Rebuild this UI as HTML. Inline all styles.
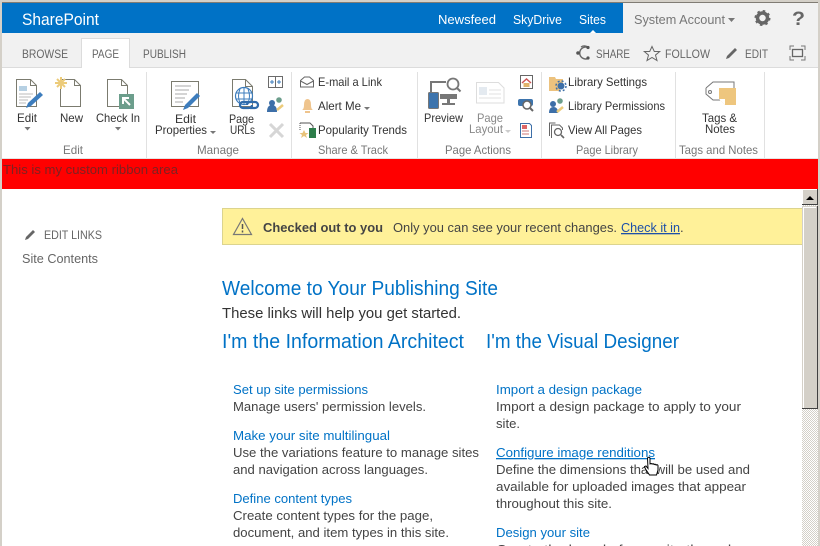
<!DOCTYPE html>
<html><head><meta charset="utf-8"><style>
html,body{margin:0;padding:0;width:820px;height:546px;overflow:hidden;background:#fff}
svg{display:block}
text{font-family:"Liberation Sans",sans-serif;font-size:12px;fill:#3b3b3b;white-space:pre}
.t{font-size:11.5px;fill:#666}
.r{font-size:12px;fill:#333}
.g{font-size:12px;fill:#777}
.l{font-size:13px;fill:#0072c6}
.b{font-size:13px;fill:#444}
.h{font-size:20px;fill:#0072c6}
.i{fill:none;stroke:#7b7b6f;stroke-width:1}
</style></head><body>
<svg width="820" height="546" viewBox="0 0 820 546" xmlns="http://www.w3.org/2000/svg">
<defs><pattern id="ck" width="2" height="2" patternUnits="userSpaceOnUse"><rect width="2" height="2" fill="#fff"/><rect width="1" height="1" fill="#d4d0c8"/><rect x="1" y="1" width="1" height="1" fill="#d4d0c8"/></pattern></defs>
<rect width="820" height="546" fill="#fff"/>
<rect x="0" y="0" width="820" height="2" fill="#d4d0c8"/><rect x="2" y="2" width="816" height="1" fill="#807c74"/>
<rect x="0" y="0" width="2" height="546" fill="#d4d0c8"/>
<rect x="818" y="0" width="2" height="546" fill="#d4d0c8"/>
<!-- top bar -->
<rect x="2" y="3" width="621" height="30" fill="#0072c6"/>
<rect x="623" y="3" width="195" height="30" fill="#f1f1f1"/>
<text x="22" y="25" textLength="77" lengthAdjust="spacingAndGlyphs" style="font-size:17px;fill:#fff">SharePoint</text>
<text x="438" y="24" textLength="58" lengthAdjust="spacingAndGlyphs" style="font-size:13px;fill:#fff">Newsfeed</text>
<text x="513" y="24" textLength="49" lengthAdjust="spacingAndGlyphs" style="font-size:13px;fill:#fff">SkyDrive</text>
<text x="579" y="24" textLength="27" lengthAdjust="spacingAndGlyphs" style="font-size:13px;fill:#fff">Sites</text>
<path d="M590 33l3-3 3 3z" fill="#fff"/>
<text x="634" y="24" textLength="91" lengthAdjust="spacingAndGlyphs" style="font-size:13px;fill:#777">System Account</text>
<path d="M728 18h7l-3.500 4z" fill="#777"/>
<circle cx="762.500" cy="18" r="5" fill="none" stroke="#666" stroke-width="3.500"/>
<circle cx="762.500" cy="18" r="7" fill="none" stroke="#666" stroke-width="2" stroke-dasharray="2.500 3"/>
<text x="792" y="25" textLength="13" lengthAdjust="spacingAndGlyphs" style="font-size:19px;font-weight:bold;fill:#666">?</text>
<!-- tabs -->
<rect x="2" y="33" width="816" height="34" fill="#f1f1f1"/>
<rect x="2" y="67" width="816" height="1" fill="#dcdcdc"/>
<path d="M81.500 68V38.500H129.500V68" fill="#fff" stroke="#dcdcdc"/>
<text x="22" y="58" textLength="46" lengthAdjust="spacingAndGlyphs" class="t">BROWSE</text>
<text x="92" y="58" textLength="27" lengthAdjust="spacingAndGlyphs" class="t">PAGE</text>
<text x="143" y="58" textLength="43" lengthAdjust="spacingAndGlyphs" class="t">PUBLISH</text>
<path d="M589 48a6 6 0 1 0 0 10" fill="none" stroke="#666" stroke-width="1.400"/><path d="M581 47a6 6 0 0 1 8 1" fill="none" stroke="#666" stroke-width="1.200"/><circle cx="578" cy="53" r="1.800" fill="#555"/><circle cx="588" cy="47.500" r="1.600" fill="#555"/><circle cx="588" cy="58" r="1.600" fill="#555"/>
<text x="596" y="58" textLength="34" lengthAdjust="spacingAndGlyphs" class="t">SHARE</text>
<path d="M652 46.500l2.300 5h5.400l-4.200 3.600 1.500 5.400-5-3-5 3 1.500-5.400-4.200-3.600h5.400z" fill="none" stroke="#666"/>
<text x="665" y="58" textLength="45" lengthAdjust="spacingAndGlyphs" class="t">FOLLOW</text>
<path d="M726 59l1-3 8-8 2 2-8 8z" fill="#666"/>
<text x="745" y="58" textLength="23" lengthAdjust="spacingAndGlyphs" class="t">EDIT</text>
<path d="M790 50v-4h4M801 46h4v4M805 56v4h-4M794 60h-4v-4" fill="none" stroke="#777"/><rect x="792.500" y="49.500" width="10" height="7" fill="none" stroke="#666" stroke-width="1.300"/>
<!-- ribbon separators -->
<g fill="#e1e1e1"><rect x="146" y="72" width="1" height="86"/><rect x="291" y="72" width="1" height="86"/><rect x="417" y="72" width="1" height="86"/><rect x="541" y="72" width="1" height="86"/><rect x="675" y="72" width="1" height="86"/><rect x="764" y="72" width="1" height="86"/></g>
<rect x="2" y="158" width="816" height="1" fill="#e4e4e4"/>
<!-- Edit icon -->
<path class="i" d="M16.500 79.500h14l6 6v21h-20zM30.500 79.500v6h6"/>
<rect x="19" y="86" width="8" height="5" fill="#b6d0e3"/>
<path d="M19 94h14M19 97h12M19 100h9M19 103h7" stroke="#bbb"/>
<path d="M26 108l2-5 12-11 3 3-12 11z" fill="#3d7dbd"/>
<!-- New -->
<path class="i" d="M60.500 79.500h14l6 6v21h-20zM74.500 79.500v6h6"/>
<path d="M61 77v12M55 83h12M57 79l8 8M65 79l-8 8" stroke="#eccb7a" stroke-width="2"/>
<!-- Check in -->
<path class="i" d="M107.500 79.500h14l6 6v21h-20zM121.500 79.500v6h6"/>
<rect x="119" y="94" width="15" height="15" fill="#6c9e8c"/>
<path d="M130 105l-6-6M123 104v-6h6" fill="none" stroke="#fff" stroke-width="2"/>
<text x="17" y="122" textLength="20" lengthAdjust="spacingAndGlyphs" class="r">Edit</text>
<path d="M24.500 127h6l-3 3.500z" fill="#777"/>
<text x="60" y="122" textLength="23" lengthAdjust="spacingAndGlyphs" class="r">New</text>
<text x="96" y="122" textLength="44" lengthAdjust="spacingAndGlyphs" class="r">Check In</text>
<path d="M115 127h6l-3 3.500z" fill="#777"/>
<text x="63" y="154" textLength="20" lengthAdjust="spacingAndGlyphs" class="g">Edit</text>
<!-- Edit props -->
<rect x="171.500" y="81.500" width="27" height="25" class="i"/>
<path d="M175 86h16M175 90h14M175 94h12M175 98h10M175 102h8" stroke="#aaa"/>
<path d="M183 110l2-5 12-12 3 3-12 12z" fill="#3d7dbd"/>
<text x="175" y="123" textLength="21" lengthAdjust="spacingAndGlyphs" class="r">Edit</text>
<text x="155" y="134" textLength="52" lengthAdjust="spacingAndGlyphs" class="r">Properties</text>
<path d="M210 131h6l-3 3z" fill="#777"/>
<!-- Page URLs -->
<path class="i" d="M232.500 79.500h13l7 7v20h-20zM245.500 79.500v7h7"/>
<circle cx="244" cy="96" r="8.500" fill="#fff" stroke="#3d7dbd" stroke-width="1.200"/><path d="M235.500 93h17M235.500 99h17M244 87.500v17M240 89q-3 7 0 14M248 89q3 7 0 14" fill="none" stroke="#3d7dbd"/>
<path d="M249 102h-6a3 3 0 0 0 0 6h6a3 3 0 0 0 3-3M247 105a3 3 0 0 1 3-3h5a3 3 0 0 1 0 6h-5" fill="none" stroke="#2f6bab" stroke-width="2.300"/>
<text x="229" y="123" textLength="25" lengthAdjust="spacingAndGlyphs" class="r">Page</text>
<text x="230" y="134" textLength="25" lengthAdjust="spacingAndGlyphs" class="r">URLs</text>
<rect x="268.500" y="76.500" width="14" height="11" fill="none" stroke="#6b6b6b"/><path d="M275.500 77v10" stroke="#6b6b6b"/><path d="M270 82h4M272 80v4M277 82h4M279 80v4" stroke="#3d7dbd"/>
<circle cx="272" cy="103" r="3" fill="#3d6fa8"/><path d="M267 112q0-7 5-7t5 7z" fill="#3d6fa8"/><circle cx="279" cy="100" r="2.800" fill="#6c9e8c"/><path d="M277 110l6-5" stroke="#eccb7a" stroke-width="2.500"/>
<path d="M270 124l13 13M283 124l-13 13" stroke="#d6d6d6" stroke-width="3"/>
<text x="197" y="154" textLength="42" lengthAdjust="spacingAndGlyphs" class="g">Manage</text>
<!-- Share & track -->
<path d="M300.500 80.500l4-3.500h5l4 3.500v6.500h-13z" fill="none" stroke="#666"/><path d="M300.500 81l6.500 3.500 6.500-3.500" fill="none" stroke="#666"/>
<path d="M302 110q2-1 2-5 0-6 3.500-6t3.500 6q0 4 2 5z" fill="#efc48d"/><rect x="305" y="111" width="5" height="2" fill="#efc48d"/>
<path d="M300 123h10l3 3v2" class="i" style="stroke:#555"/><path d="M300 123v8" stroke="#555" stroke-dasharray="1 1"/><rect x="309" y="128" width="7" height="10" fill="#2d7d4a"/><path d="M304 130l1.500 3h3l-2.500 2 1 3-3-2-3 2 1-3-2.500-2h3z" fill="#e8c37a"/>
<text x="318" y="86" textLength="64" lengthAdjust="spacingAndGlyphs" class="r">E-mail a Link</text>
<text x="318" y="110" textLength="43" lengthAdjust="spacingAndGlyphs" class="r">Alert Me</text>
<path d="M364 107h6l-3 3z" fill="#777"/>
<text x="318" y="134" textLength="89" lengthAdjust="spacingAndGlyphs" class="r">Popularity Trends</text>
<text x="318" y="154" textLength="70" lengthAdjust="spacingAndGlyphs" class="g">Share &amp; Track</text>
<!-- Page actions -->
<path d="M431 92V82h15" fill="none" stroke="#777" stroke-width="2"/><rect x="428.500" y="92.500" width="10" height="16" rx="1" fill="#3d74ad" stroke="#777"/>
<circle cx="453" cy="84" r="5.500" fill="#fff" stroke="#777" stroke-width="1.800"/><path d="M457 88l3.500 3.500" stroke="#777" stroke-width="2"/><path d="M440 94h17v5h-17z" fill="#777"/><rect x="447" y="99" width="3" height="4" fill="#777"/><rect x="442" y="103" width="13" height="2" fill="#777"/>
<text x="424" y="122" textLength="39" lengthAdjust="spacingAndGlyphs" class="r">Preview</text>
<path d="M476.500 82.500h22l5.500 5.500v15h-27.500z" fill="#fff" stroke="#ddd"/><rect x="479" y="87" width="8" height="8" fill="#e4eaf0"/><path d="M489 90h12M489 94h12M479 98h22" stroke="#e0e0e0"/>
<text x="477" y="122" textLength="26" lengthAdjust="spacingAndGlyphs" class="r" style="fill:#888">Page</text>
<text x="469" y="133" textLength="34" lengthAdjust="spacingAndGlyphs" class="r" style="fill:#888">Layout</text>
<path d="M505 130h6l-3 3z" fill="#ccc"/>
<text x="445" y="154" textLength="66" lengthAdjust="spacingAndGlyphs" class="g">Page Actions</text>
<rect x="520.500" y="75.500" width="12" height="13" fill="none" stroke="#666"/><path d="M522 83l4.500-4 4.500 4" fill="none" stroke="#c55" stroke-width="1.500"/><rect x="523.500" y="83" width="6" height="4" fill="#e0b36a"/>
<rect x="518" y="99" width="15" height="7" rx="2" fill="#3d74ad"/><circle cx="527" cy="105" r="4" fill="#fff" stroke="#666" stroke-width="1.500"/><path d="M530 108l3 3" stroke="#666" stroke-width="2"/>
<path d="M520.500 123.500h9l2 2v12h-11z" fill="#fff" stroke="#3d6fa8"/><rect x="522" y="125" width="5" height="4" fill="#d66"/><path d="M522 131h7M522 134h7" stroke="#c77"/>
<!-- Page library -->
<path d="M549 77h6l1 2h7v6h-3v6h-11z" fill="#ecc27e"/><circle cx="561" cy="86" r="3.500" fill="#3d6fa8"/><circle cx="561" cy="86" r="5" fill="none" stroke="#3d6fa8" stroke-dasharray="2 2" stroke-width="1.500"/>
<circle cx="553" cy="104" r="3" fill="#3d6fa8"/><path d="M549 113q0-6 4.500-6t4.500 6z" fill="#3d6fa8"/><circle cx="560" cy="101" r="2.800" fill="#6c9e8c"/><path d="M557 112l6-5" stroke="#eccb7a" stroke-width="2.500"/>
<path d="M549.500 136v-13h6" class="i" style="stroke:#666"/><path d="M551.500 138v-13h8l3 3v2" class="i" style="stroke:#666"/><circle cx="558" cy="132" r="3.500" fill="#fff" stroke="#666" stroke-width="1.300"/><path d="M561 135l3 3" stroke="#666" stroke-width="1.600"/>
<text x="568" y="86" textLength="79" lengthAdjust="spacingAndGlyphs" class="r">Library Settings</text>
<text x="568" y="110" textLength="97" lengthAdjust="spacingAndGlyphs" class="r">Library Permissions</text>
<text x="568" y="134" textLength="74" lengthAdjust="spacingAndGlyphs" class="r">View All Pages</text>
<text x="576" y="154" textLength="62" lengthAdjust="spacingAndGlyphs" class="g">Page Library</text>
<!-- tags -->
<path d="M706 88l7-6h21v6M720 100h-7l-7-6v-6" fill="none" stroke="#777"/><circle cx="710" cy="92" r="1.500" fill="none" stroke="#777"/>
<path d="M719 88h17v17h-11l-6-6z" fill="#eec67e"/><path d="M719 99h6v6z" fill="#fff"/>
<text x="702" y="122" textLength="35" lengthAdjust="spacingAndGlyphs" class="r">Tags &amp;</text>
<text x="705" y="133" textLength="30" lengthAdjust="spacingAndGlyphs" class="r">Notes</text>
<text x="679" y="154" textLength="79" lengthAdjust="spacingAndGlyphs" class="g">Tags and Notes</text>
<!-- red -->
<rect x="2" y="159" width="816" height="30" fill="#f00"/>
<text x="3" y="174" textLength="175" lengthAdjust="spacingAndGlyphs" style="font-size:13px;fill:#7c2222">This is my custom ribbon area</text>
<!-- left nav -->
<path d="M25 240l1-3 7-7 2 2-7 7z" fill="#666"/>
<text x="44" y="239" textLength="58" lengthAdjust="spacingAndGlyphs" class="t" style="font-size:12px">EDIT LINKS</text>
<text x="22" y="263" textLength="76" lengthAdjust="spacingAndGlyphs" style="font-size:13px;fill:#666">Site Contents</text>
<!-- status -->
<rect x="222.500" y="208.500" width="580" height="36" fill="#fff199" stroke="#dcd48e"/>
<path d="M242.500 218.500l9 16h-18z" fill="none" stroke="#777" stroke-width="1.200"/><path d="M242.500 224v5M242.500 230.500v2" stroke="#555" stroke-width="1.500"/>
<text x="263" y="232" textLength="120" lengthAdjust="spacingAndGlyphs" style="font-size:13px;font-weight:bold;fill:#444">Checked out to you</text>
<text x="393" y="232" textLength="224" lengthAdjust="spacingAndGlyphs" class="b">Only you can see your recent changes.</text>
<text x="621" y="232" textLength="59" lengthAdjust="spacingAndGlyphs" style="font-size:13px;fill:#1e50a8;text-decoration:underline">Check it in</text>
<text x="680" y="232" class="b">.</text>
<!-- content -->
<text x="222" y="295" textLength="276" lengthAdjust="spacingAndGlyphs" class="h">Welcome to Your Publishing Site</text>
<text x="222" y="318" textLength="239" lengthAdjust="spacingAndGlyphs" style="font-size:14.500px;fill:#333">These links will help you get started.</text>
<text x="222" y="348" textLength="242" lengthAdjust="spacingAndGlyphs" class="h">I'm the Information Architect</text>
<text x="486" y="348" textLength="193" lengthAdjust="spacingAndGlyphs" class="h">I'm the Visual Designer</text>
<text x="233" y="394" textLength="135" lengthAdjust="spacingAndGlyphs" class="l">Set up site permissions</text>
<text x="233" y="411" textLength="193" lengthAdjust="spacingAndGlyphs" class="b">Manage users' permission levels.</text>
<text x="233" y="440" textLength="157" lengthAdjust="spacingAndGlyphs" class="l">Make your site multilingual</text>
<text x="233" y="457" textLength="246" lengthAdjust="spacingAndGlyphs" class="b">Use the variations feature to manage sites</text>
<text x="233" y="474" textLength="195" lengthAdjust="spacingAndGlyphs" class="b">and navigation across languages.</text>
<text x="233" y="503" textLength="119" lengthAdjust="spacingAndGlyphs" class="l">Define content types</text>
<text x="233" y="520" textLength="200" lengthAdjust="spacingAndGlyphs" class="b">Create content types for the page,</text>
<text x="233" y="537" textLength="216" lengthAdjust="spacingAndGlyphs" class="b">document, and item types in this site.</text>
<text x="496" y="394" textLength="146" lengthAdjust="spacingAndGlyphs" class="l">Import a design package</text>
<text x="496" y="411" textLength="245" lengthAdjust="spacingAndGlyphs" class="b">Import a design package to apply to your</text>
<text x="496" y="428" textLength="24" lengthAdjust="spacingAndGlyphs" class="b">site.</text>
<text x="496" y="457" textLength="159" lengthAdjust="spacingAndGlyphs" class="l" style="text-decoration:underline">Configure image renditions</text>
<text x="496" y="474" textLength="254" lengthAdjust="spacingAndGlyphs" class="b">Define the dimensions that will be used and</text>
<text x="496" y="491" textLength="250" lengthAdjust="spacingAndGlyphs" class="b">available for uploaded images that appear</text>
<text x="496" y="508" textLength="116" lengthAdjust="spacingAndGlyphs" class="b">throughout this site.</text>
<text x="496" y="537" textLength="94" lengthAdjust="spacingAndGlyphs" class="l">Design your site</text>
<text x="496" y="554" textLength="240" lengthAdjust="spacingAndGlyphs" class="b">Create the brand of your site through</text>
<!-- cursor -->
<path d="M647.500 458.500a1.200 1.200 0 0 1 2.500 0v6a1 1 0 0 1 2 0a1 1 0 0 1 2 .5a1 1 0 0 1 2 .5 1 1 0 0 1 2 .5v4l-1.500 5h-7l-4-6-1-2.500 1.500-.5 2 2.500z" fill="#fff" stroke="#000"/>
<!-- scrollbar -->
<rect x="802" y="189" width="16" height="357" fill="url(#ck)"/>
<rect x="802" y="189" width="16" height="16" fill="#d4d0c8"/>
<path d="M802.500 205V189.500H817.500" fill="none" stroke="#fff"/><path d="M802 204.500H817.500V189" fill="none" stroke="#404040"/>
<path d="M806 200h8l-4-4z" fill="#000"/>
<rect x="802" y="206" width="16" height="203" fill="#d4d0c8"/>
<path d="M803.500 408V207.500H816" fill="none" stroke="#fff"/><path d="M802 408.500H817.500V206" fill="none" stroke="#404040"/>
</svg>
</body></html>
